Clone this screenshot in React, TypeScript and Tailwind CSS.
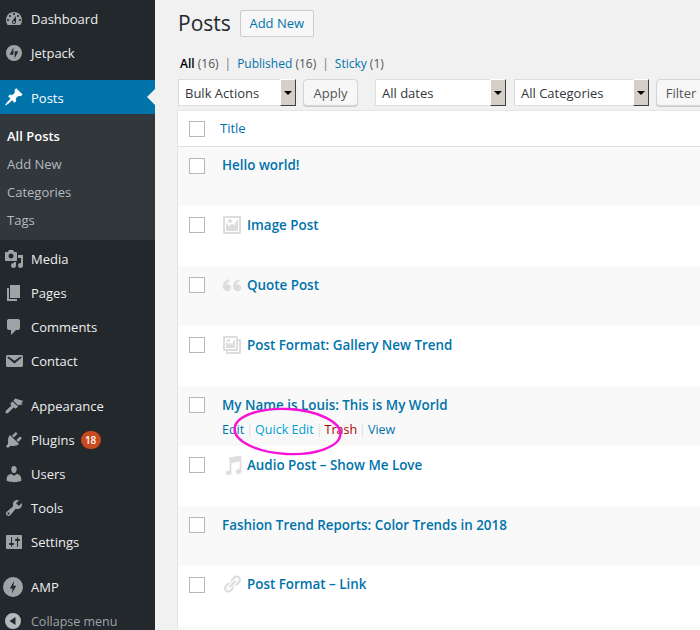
const icons = {
  dashboard: 'M3.76 16h12.48c1.1-1.37 1.76-3.11 1.76-5 0-4.42-3.58-8-8-8s-8 3.58-8 8c0 1.89.66 3.63 1.76 5zM10 4c.55 0 1 .45 1 1s-.45 1-1 1-1-.45-1-1 .45-1 1-1zM6 6c.55 0 1 .45 1 1s-.45 1-1 1-1-.45-1-1 .45-1 1-1zm8 0c.55 0 1 .45 1 1s-.45 1-1 1-1-.45-1-1 .45-1 1-1zm-5.37 5.55L12 7v6c0 1.1-.9 2-2 2s-2-.9-2-2c0-.57.24-1.08.63-1.45zM4 10c.55 0 1 .45 1 1s-.45 1-1 1-1-.45-1-1 .45-1 1-1zm12 0c.55 0 1 .45 1 1s-.45 1-1 1-1-.45-1-1 .45-1 1-1zm-5 3c0-.55-.45-1-1-1s-1 .45-1 1 .45 1 1 1 1-.45 1-1z',
  jetpack: 'M10 2a8 8 0 1 0 0 16 8 8 0 0 0 0-16zM9.4 4.5v7.2H5.6zM10.6 15.5V8.3h3.8z',
  post: 'M10.44 3.02l1.82-1.82 6.36 6.35-1.83 1.82c-1.05-.68-2.48-.57-3.41.36l-.75.75c-.92.93-1.04 2.35-.35 3.41l-1.83 1.82-2.41-2.41-2.8 2.79c-.42.42-3.38 2.71-3.8 2.29s1.86-3.39 2.28-3.81l2.79-2.79L4.1 9.36l1.83-1.82c1.05.69 2.48.57 3.4-.36l.75-.75c.93-.92 1.05-2.35.36-3.41z',
  media: 'M13 11V4c0-.55-.45-1-1-1h-1.67L9 1H5L3.67 3H2c-.55 0-1 .45-1 1v7c0 .55.45 1 1 1h10c.55 0 1-.45 1-1zM7 4.5c1.38 0 2.5 1.12 2.5 2.5S8.38 9.5 7 9.5 4.5 8.38 4.5 7 5.62 4.5 7 4.5zM14 6h5v10.5c0 1.38-1.12 2.5-2.5 2.5S14 17.88 14 16.5s1.12-2.5 2.5-2.5c.17 0 .34.02.5.05V9h-3V6zm-4 8.05V13h2v3.5c0 1.38-1.12 2.5-2.5 2.5S7 17.88 7 16.5 8.12 14 9.5 14c.17 0 .34.02.5.05z',
  page: 'M6 15V2h10v13H6zm-1 1h8v2H3V5h2v11z',
  comments: 'M5 2h9c1.1 0 2 .9 2 2v7c0 1.1-.9 2-2 2h-2l-5 5v-5H5c-1.1 0-2-.9-2-2V4c0-1.1.9-2 2-2z',
  email: 'M3.87 4h13.25C18.37 4 19 4.59 19 5.79v8.42c0 1.19-.63 1.79-1.88 1.79H3.87c-1.25 0-1.88-.6-1.88-1.79V5.79c0-1.2.63-1.79 1.88-1.79zm6.62 8.6l6.74-5.53c.24-.2.43-.66.13-1.07-.29-.41-.82-.42-1.17-.17l-5.7 3.86L4.8 5.83c-.35-.25-.88-.24-1.17.17-.3.41-.11.87.13 1.07z',
  appearance: 'M11.2 2.4l8.2 2.6-2 1.6 1.4 1.6-3.6.9-.9.3-5-4.6zM8.5 5.4l5.6 5.2-1.9 1.6c-.6.5-1.4.4-1.9-.1l-.7-.6-5.3 5.3c-.7.7-1.8.8-2.4.2s-.5-1.7.2-2.4l5.3-5.1-.6-.7c-.5-.5-.5-1.3 0-1.8z',
  plugins: 'M13.11 4.36L9.87 7.6 8 5.73l3.24-3.24c.35-.34 1.05-.2 1.56.32.52.51.66 1.21.31 1.55zm-8 1.77l.91-1.12 9.01 9.01-1.19.84c-.71.71-2.63 1.16-3.82 1.16H6.14L4.9 17.26c-.59.59-1.54.59-2.12 0-.59-.58-.59-1.53 0-2.12l1.24-1.24v-3.88c0-1.13.4-3.19 1.09-3.89zm7.26 3.97l3.24-3.24c.34-.35 1.04-.21 1.55.31.52.51.66 1.21.31 1.55l-3.24 3.25z',
  users: 'M10 9.25c-2.27 0-2.73-3.44-2.73-3.44C7 4.02 7.82 2 9.97 2c2.16 0 2.98 2.02 2.71 3.81 0 0-.41 3.44-2.68 3.44zm0 2.57L12.72 10c2.39 0 4.52 2.33 4.52 4.53v2.49s-3.65 1.13-7.24 1.13c-3.65 0-7.24-1.13-7.24-1.13v-2.49c0-2.25 1.94-4.48 4.47-4.48z',
  tools: 'M16.68 9.77c-1.34 1.34-3.3 1.67-4.95.99l-5.41 6.52c-.99.99-2.59.99-3.58 0s-.99-2.59 0-3.57l6.52-5.42c-.68-1.65-.35-3.61.99-4.95 1.28-1.28 3.12-1.62 4.72-1.06l-2.89 2.89 2.82 2.82 2.86-2.87c.53 1.58.18 3.39-1.08 4.65zM3.81 16.21c.4.39 1.04.39 1.43 0 .4-.4.4-1.04 0-1.43-.39-.4-1.03-.4-1.43 0-.39.39-.39 1.03 0 1.43z',
  settings: 'M18 16V4c0-.55-.45-1-1-1H3c-.55 0-1 .45-1 1v12c0 .55.45 1 1 1h14c.55 0 1-.45 1-1zM8 11h1c.55 0 1 .45 1 1s-.45 1-1 1H8v1.5c0 .28-.22.5-.5.5s-.5-.22-.5-.5V13H6c-.55 0-1-.45-1-1s.45-1 1-1h1V5.5c0-.28.22-.5.5-.5s.5.22.5.5V11zm5-2h-1c-.55 0-1-.45-1-1s.45-1 1-1h1V5.5c0-.28.22-.5.5-.5s.5.22.5.5V7h1c.55 0 1 .45 1 1s-.45 1-1 1h-1v5.5c0 .28-.22.5-.5.5s-.5-.22-.5-.5V9z',
  amp: 'M10 0a10 10 0 1 0 0 20 10 10 0 0 0 0-20zM8.9 16.2l.7-4.6H7.3c-.2 0-.4-.2-.3-.4l4-7.2.1.1-.7 4.7h2.3c.2 0 .4.2.3.4l-4 7.1z',
  collapse: 'M10 2a8 8 0 1 0 0 16 8 8 0 0 0 0-16zM12.5 14L6.5 10l6-4z',
  image: 'M2.25 1h15.5c.69 0 1.25.56 1.25 1.25v15.5c0 .69-.56 1.25-1.25 1.25H2.25C1.56 19 1 18.44 1 17.75V2.25C1 1.56 1.56 1 2.25 1zM17 17V3H3v14h14zM10 6c0-1.1-.9-2-2-2s-2 .9-2 2 .9 2 2 2 2-.9 2-2zm3 5s0-6 3-6v10c0 .55-.45 1-1 1H5c-.55 0-1-.45-1-1V8c2 0 3 4 3 4s1-3 3-3 3 2 3 2z',
  quote: 'M8.54 12.74c0-.87-.24-1.61-.72-2.22-.73-.92-2.14-1.03-2.96-.59-.35-1.3 1.18-3.41 2.53-3.5l-.72-1.05c-2.4.15-4.74 3.16-4.67 5.8.05 2.1 1.37 4.04 3.7 4.04 1.59 0 2.84-1.13 2.84-2.48zm8.92 0c0-.87-.23-1.61-.71-2.22-.74-.94-2.14-1.03-2.96-.59-.36-1.3 1.18-3.41 2.52-3.5l-.72-1.05c-2.39.15-4.73 3.16-4.67 5.8.05 2.1 1.38 4.04 3.7 4.04 1.59 0 2.84-1.13 2.84-2.48z',
  gallery: 'M16 4h1.96c.57 0 1.04.47 1.04 1.04v12.92c0 .57-.47 1.04-1.04 1.04H5.04C4.47 19 4 18.53 4 17.96V16H2.04C1.47 16 1 15.53 1 14.96V2.04C1 1.47 1.47 1 2.04 1h12.92c.57 0 1.04.47 1.04 1.04V4zM3 14h11V3H3v11zm5-8.5C8 4.67 7.33 4 6.5 4S5 4.67 5 5.5 5.67 7 6.5 7 8 6.33 8 5.5zm2 4.5s1-5 3-5v8H4V7c2 0 2 3 2 3s.33-2 2-2 2 2 2 2zm7 7V6h-1v8.96c0 .57-.47 1.04-1.04 1.04H6v1h11z',
  audio: 'M6.99 3.08l11.02-2c.55-.08.99.45.99 1.01v14.5c0 1.1-1.12 2.41-2.5 2.41s-2.5-1.31-2.5-2.41 1.12-2.09 2.5-2.09c.55 0 1.06.16 1.5.42V5.99l-9 2V18c-.01 1.1-1.13 2-2.51 2s-2.5-.9-2.5-2 1.12-2 2.5-2c.56 0 1.07.15 1.49.4V4.08c0-.56.44-.91 1.01-1z',
  link: 'M17.74 2.76c1.68 1.69 1.68 4.41 0 6.1l-1.53 1.52c-1.12 1.12-2.7 1.47-4.14 1.09l2.62-2.61.76-.77.76-.76c.84-.84.84-2.2 0-3.04-.84-.85-2.2-.85-3.04 0l-.77.76-3.38 3.38c-.37-1.44-.02-3.02 1.1-4.14l1.52-1.53c1.69-1.68 4.42-1.68 6.1 0zM8.59 13.43l5.34-5.34c.42-.42.42-1.1 0-1.52-.44-.43-1.13-.39-1.53 0l-5.33 5.34c-.42.42-.42 1.1 0 1.52.44.43 1.13.39 1.52 0zm-.76 2.29l4.14-4.15c.38 1.44.03 3.02-1.09 4.14l-1.52 1.53c-1.69 1.68-4.41 1.68-6.1 0-1.68-1.68-1.68-4.42 0-6.1l1.53-1.52c1.12-1.12 2.7-1.47 4.14-1.1l-4.14 4.15c-.85.84-.85 2.2 0 3.05.84.84 2.2.84 3.04 0z',
};

type IconName = keyof typeof icons;

function Icon({ name, className, viewBox = '0 0 20 20', thick }: { name: IconName; className: string; viewBox?: string; thick?: boolean }) {
  return (
    <svg viewBox={viewBox} fill="currentColor" className={className}>
      <path
        fillRule="evenodd"
        d={icons[name]}
        stroke={thick ? 'currentColor' : undefined}
        strokeWidth={thick ? 0.7 : undefined}
      />
    </svg>
  );
}

function MenuItem({ icon, label, badge }: { icon: IconName; label: string; badge?: string }) {
  return (
    <div className="flex items-center h-[34px] shrink-0 text-[13px] text-[#eeeeee]">
      <div className="w-[31px] pl-[4px] shrink-0">
        <Icon name={icon} className="w-5 h-5 text-[#9ea3a8]" />
      </div>
      <span className="pt-[2px]">{label}</span>
      {badge && (
        <span className="ml-[6px] w-5 h-[18px] rounded-full bg-[#ca4a1f] text-white text-[10px] font-semibold flex items-center justify-center">
          {badge}
        </span>
      )}
    </div>
  );
}

function Sidebar() {
  return (
    <div className="w-[155px] shrink-0 bg-[#23282d] pt-[2px] flex flex-col">
      <MenuItem icon="dashboard" label="Dashboard" />
      <MenuItem icon="jetpack" label="Jetpack" />
      <div className="h-[10px] shrink-0" />
      <div className="relative flex items-center h-[34px] shrink-0 bg-[#0073aa] text-white text-[13px]">
        <div className="w-[31px] pl-[4px] shrink-0">
          <Icon name="post" className="w-5 h-5 text-white" />
        </div>
        <span className="pt-[3px]">Posts</span>
        <div className="absolute right-0 top-[9px] border-y-[8px] border-y-transparent border-r-[8px] border-r-[#f1f1f1]" />
      </div>
      <div className="bg-[#32373c] pt-[8px] pb-[6px] pl-[7px] shrink-0 text-[13px] text-[#b4b9be]">
        <div className="h-[28px] pt-[2px] flex items-center text-white font-semibold">All Posts</div>
        <div className="h-[28px] pt-[2px] flex items-center">Add New</div>
        <div className="h-[28px] pt-[2px] flex items-center">Categories</div>
        <div className="h-[28px] pt-[2px] flex items-center">Tags</div>
      </div>
      <div className="h-[2px] shrink-0" />
      <MenuItem icon="media" label="Media" />
      <MenuItem icon="page" label="Pages" />
      <MenuItem icon="comments" label="Comments" />
      <MenuItem icon="email" label="Contact" />
      <div className="h-[11px] shrink-0" />
      <MenuItem icon="appearance" label="Appearance" />
      <MenuItem icon="plugins" label="Plugins" badge="18" />
      <MenuItem icon="users" label="Users" />
      <MenuItem icon="tools" label="Tools" />
      <MenuItem icon="settings" label="Settings" />
      <div className="h-[11px] shrink-0" />
      <div className="flex items-center h-[34px] shrink-0 text-[13px] text-[#eeeeee]">
        <div className="w-[31px] pl-[3px] shrink-0">
          <Icon name="amp" className="w-5 h-5 text-[#9ea3a8]" />
        </div>
        <span className="pt-[2px]">AMP</span>
      </div>
      <div className="flex items-center h-[34px] shrink-0 text-[12.5px] text-[#9ea3a8]">
        <div className="w-[31px] pl-[3px] shrink-0">
          <Icon name="collapse" className="w-5 h-5 text-[#b4b9be]" />
        </div>
        <span className="pt-[2px]">Collapse menu</span>
      </div>
    </div>
  );
}

function Select({ label, className }: { label: string; className: string }) {
  return (
    <div className={`h-[27px] bg-white border border-[#dddddd] flex items-stretch justify-between shrink-0 text-[13px] text-[#32373c] ${className}`}>
      <span className="pl-[6px] pt-[2px] flex items-center">{label}</span>
      <span className="w-[16px] -my-px -mr-px bg-[#d4d0c8] border border-t-white border-l-white border-r-[#404040] border-b-[#404040] flex items-center justify-center">
        <span className="border-x-[4px] border-x-transparent border-t-[4px] border-t-black" />
      </span>
    </div>
  );
}

function Button({ label, className }: { label: string; className: string }) {
  return (
    <div className={`h-[27px] pt-[2px] bg-[#f7f7f7] border border-[#d5d5d5] rounded-[4px] shadow-[0_1px_0_#cccccc] flex items-center justify-center shrink-0 text-[13px] text-[#555555] ${className}`}>
      {label}
    </div>
  );
}

function Checkbox() {
  return <div className="w-4 h-4 bg-white border border-[#b4b9be] shrink-0" />;
}

const rows: { title: string; icon?: IconName; actions?: boolean }[] = [
  { title: 'Hello world!' },
  { title: 'Image Post', icon: 'image' },
  { title: 'Quote Post', icon: 'quote' },
  { title: 'Post Format: Gallery New Trend', icon: 'gallery' },
  { title: 'My Name is Louis: This is My World', actions: true },
  { title: 'Audio Post – Show Me Love', icon: 'audio' },
  { title: 'Fashion Trend Reports: Color Trends in 2018' },
  { title: 'Post Format – Link', icon: 'link' },
  { title: '' },
];

function PostRow({ row, index }: { row: (typeof rows)[number]; index: number }) {
  return (
    <div className={`flex shrink-0 pl-[11px] ${index === 0 ? 'h-[59px]' : 'h-[60px]'} ${index % 2 === 0 ? 'bg-[#f9f9f9]' : 'bg-white'}`}>
      <div className="pt-[11px] w-[33px] shrink-0">{row.title && <Checkbox />}</div>
      <div className={index === 0 || index === 7 ? 'pt-[8px]' : 'pt-[9px]'}>
        <div className="flex items-center gap-[5px] text-[13.4px] font-semibold text-[#0073aa] whitespace-nowrap">
          {row.icon && (
            <Icon
              name={row.icon}
              viewBox={row.icon === 'quote' ? '1 3 17.5 14' : undefined}
              thick={row.icon === 'quote' || row.icon === 'audio'}
              className="w-5 h-5 text-[#dddddd]"
            />
          )}
          <span>{row.title}</span>
        </div>
        {row.actions && (
          <div className="mt-[6px] flex items-center text-[12.5px] text-[#dddddd] whitespace-nowrap">
            <span className="text-[#0073aa]">Edit</span>
            <span className="mx-[2px]">|</span>
            <span className="text-[#00a0d2]">Quick Edit</span>
            <span className="mx-[2px]">|</span>
            <span className="text-[#aa0000]">Trash</span>
            <span className="mx-[2px]">|</span>
            <span className="text-[#0073aa]">View</span>
          </div>
        )}
      </div>
    </div>
  );
}

export default function App() {
  return (
    <div className="relative w-[700px] h-[630px] overflow-hidden flex bg-[#f1f1f1] font-['Open_Sans','Liberation_Sans',sans-serif]">
      <Sidebar />
      <div className="flex-1 min-w-0 pl-[22px] pt-[10px]">
        <div className="flex items-center h-[27px] pl-px">
          <h1 className="text-[21px] text-[#23282d]">Posts</h1>
          <div className="ml-[9px] w-[74px] h-[27px] bg-[#f7f7f7] border border-[#cccccc] rounded-[2px] flex items-center justify-center text-[13px] font-medium text-[#0073aa]">
            Add New
          </div>
        </div>
        <div className="mt-[17px] h-[20px] pl-[3px] flex items-center gap-[6px] text-[12px] text-[#555555] whitespace-nowrap">
          <span><span className="font-semibold text-black">All</span> (16)</span>
          <span className="text-[#72777c]">|</span>
          <span><span className="text-[#0073aa]">Published</span> (16)</span>
          <span className="text-[#72777c]">|</span>
          <span><span className="text-[#0073aa]">Sticky</span> (1)</span>
        </div>
        <div className="mt-[5px] pl-px flex items-start w-[600px]">
          <Select label="Bulk Actions" className="w-[118px]" />
          <Button label="Apply" className="ml-[7px] w-[55px]" />
          <Select label="All dates" className="ml-[17px] w-[131px]" />
          <Select label="All Categories" className="ml-[8px] w-[135px]" />
          <Button label="Filter" className="ml-[7px] w-[50px]" />
        </div>
        <div className="mt-[4px] w-[600px] bg-white border border-[#e5e5e5] flex flex-col">
          <div className="flex items-center h-[36px] pl-[11px] border-b border-[#e1e1e1] shrink-0">
            <div className="w-[31px] shrink-0"><Checkbox /></div>
            <span className="text-[13px] text-[#0073aa]">Title</span>
          </div>
          {rows.map((row, i) => (
            <PostRow key={i} row={row} index={i} />
          ))}
        </div>
      </div>
      <svg viewBox="0 0 109 49" fill="none" className="absolute left-[233px] top-[407px] w-[109px] h-[49px]">
        <ellipse cx="54.5" cy="24.5" rx="53" ry="22.5" stroke="#f612d8" strokeWidth="2.4" transform="rotate(3 54.5 24.5)" />
      </svg>
    </div>
  );
}
